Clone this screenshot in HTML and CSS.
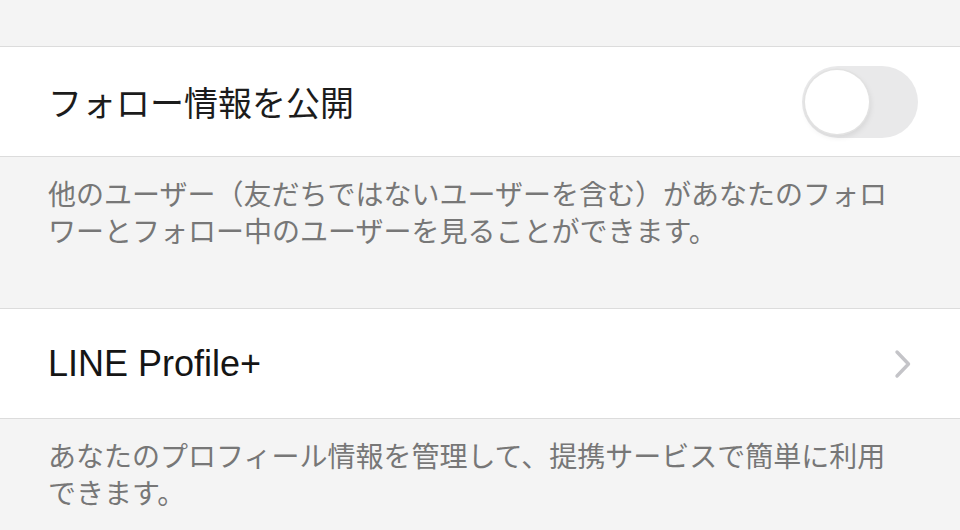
FILE: index.html
```html
<!DOCTYPE html>
<html lang="ja">
<head>
<meta charset="utf-8">
<title>設定</title>
<link rel="stylesheet" href="styles.css">
</head>
<body>
<div class="spacer"></div>
<div class="row">
  <span class="label">フォロー情報を公開</span>
  <span class="toggle"><span class="knob"></span></span>
</div>
<div class="note note-first">他のユーザー（友だちではないユーザーを含む）があなたのフォロワーとフォロー中のユーザーを見ることができます。</div>
<div class="row row-link">
  <span class="label label-latin">LINE Profile+</span>
  <svg class="chevron" width="18" height="30" viewBox="0 0 18 30" aria-hidden="true"><path d="M3 3 L14.5 15 L3 27" fill="none" stroke="#c4c4c8" stroke-width="3.4" stroke-linecap="round" stroke-linejoin="round"/></svg>
</div>
<div class="note">あなたのプロフィール情報を管理して、提携サービスで簡単に利用できます。</div>
</body>
</html>
```
FILE: styles.css
```css
html, body {
  margin: 0;
  padding: 0;
}
body {
  background: #f4f4f4;
  font-family: "Noto Sans CJK JP", "Noto Sans", sans-serif;
  width: 960px;
  height: 530px;
  overflow: hidden;
}
.spacer {
  height: 46px;
}
.row {
  display: flex;
  align-items: center;
  justify-content: space-between;
  height: 109px;
  background: #ffffff;
  border-top: 1px solid #dcdcdc;
  border-bottom: 1px solid #dcdcdc;
  padding: 0 42px 0 48px;
}
.row-link {
  padding-right: 48px;
}
.label {
  font-size: 34px;
  color: #1c1c1c;
  letter-spacing: 0;
}
.label-latin {
  font-family: "Liberation Sans", "Noto Sans CJK JP", sans-serif;
  font-size: 36px;
  color: #151515;
}
.toggle {
  display: flex;
  align-items: center;
  width: 116px;
  height: 72px;
  border-radius: 36px;
  background: #e9e9ea;
  box-sizing: border-box;
  padding: 0 3px;
}
.knob {
  width: 64px;
  height: 64px;
  border-radius: 50%;
  background: #ffffff;
  box-shadow: 0 0 0 1.5px #e2e2e2, 1px 3px 6px rgba(0, 0, 0, 0.10);
}
.chevron {
  display: block;
}
.note {
  padding: 18px 48px 0 48px;
  font-size: 28px;
  line-height: 37px;
  color: #777777;
}
.note-first {
  height: 133px;
}
```
